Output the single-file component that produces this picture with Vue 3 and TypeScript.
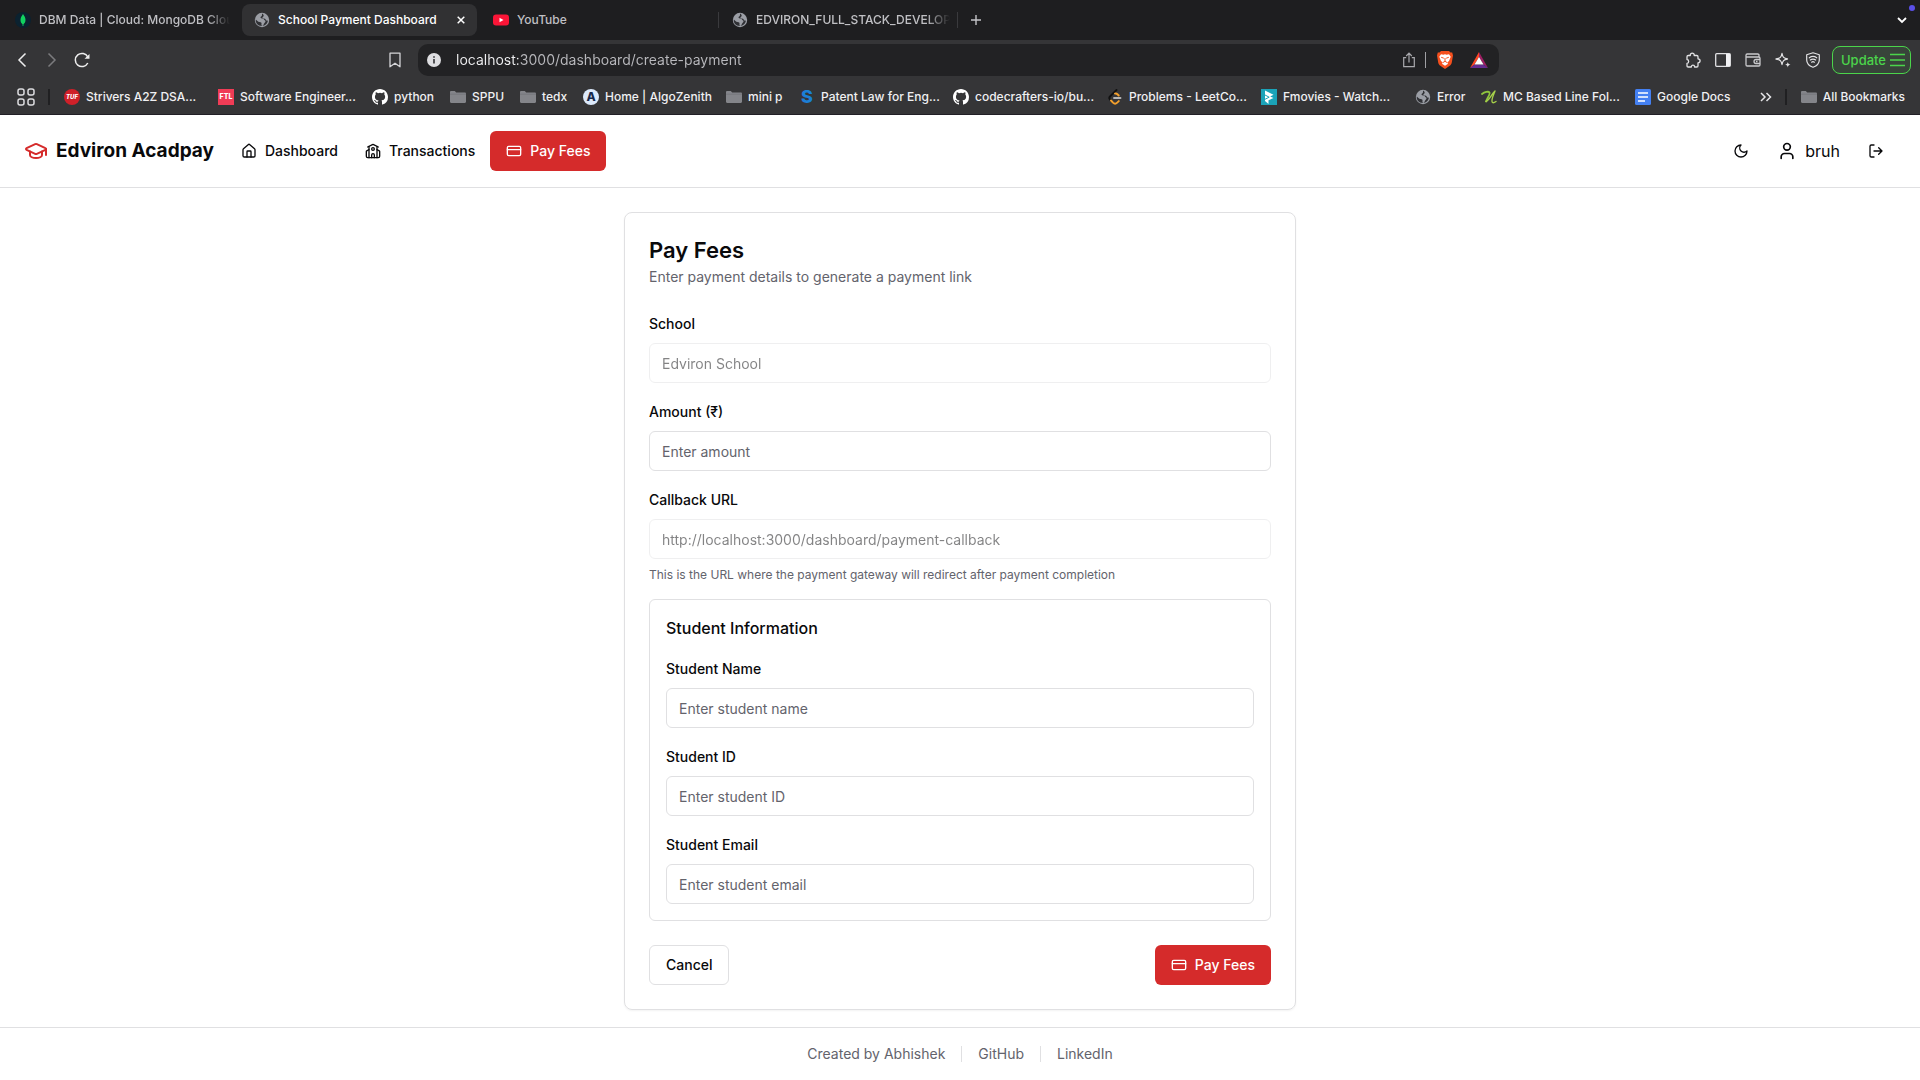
<script setup lang="ts">
import { ref } from 'vue'

interface Bookmark {
  label: string
  icon?: string
  badge?: string
  kind?: string
  width: number
}

interface Field {
  id: string
  label: string
  placeholder: string
}

const bookmarks: Bookmark[] = [
  { label: 'Strivers A2Z DSA...', badge: 'TUF', kind: 'tuf', width: 154 },
  { label: 'Software Engineer...', badge: 'FTL', kind: 'ftl', width: 154 },
  { label: 'python', icon: 'github', width: 78 },
  { label: 'SPPU', icon: 'folder', width: 70 },
  { label: 'tedx', icon: 'folder', width: 63 },
  { label: 'Home | AlgoZenith', badge: 'A', kind: 'algo', width: 143 },
  { label: 'mini p', icon: 'folder', width: 73 },
  { label: 'Patent Law for Eng...', badge: 'S', kind: 'swayam', width: 154 },
  { label: 'codecrafters-io/bu...', icon: 'github', width: 154 },
  { label: 'Problems - LeetCo...', icon: 'leet', width: 154 },
  { label: 'Fmovies - Watch...', icon: 'fmovies', width: 154 },
  { label: 'Error', icon: 'globe', width: 66 },
  { label: 'MC Based Line Fol...', icon: 'line', width: 154 },
  { label: 'Google Docs', icon: 'docs', width: 112 },
]

const tools = [
  { icon: 'puzzle', label: 'Extensions' },
  { icon: 'sidebar', label: 'Sidebar' },
  { icon: 'wallet', label: 'Wallet' },
  { icon: 'sparkle', label: 'Assistant' },
  { icon: 'vpn', label: 'VPN' },
]

const studentFields: Field[] = [
  { id: 'student-name', label: 'Student Name', placeholder: 'Enter student name' },
  { id: 'student-id', label: 'Student ID', placeholder: 'Enter student ID' },
  { id: 'student-email', label: 'Student Email', placeholder: 'Enter student email' },
]

const address = ref('localhost:3000/dashboard/create-payment')
const school = ref('Edviron School')
const callbackUrl = ref('http://localhost:3000/dashboard/payment-callback')
const amount = ref('')
const student = ref<Record<string, string>>({})
</script>

<template>
  <svg class="sprite" aria-hidden="true">
    <symbol id="i-globe" viewBox="0 0 16 16">
      <circle cx="8" cy="8" r="7.2" fill="#9b9ea5" />
      <path d="M8.6 1.6C7.2 2.6 8.8 3.6 7.2 4.5 5.8 5.2 6.6 6.6 8.2 6.6c1.8 0 1.6 1.5 2.9 2 .9.4.3 1.7-.6 2.5-1 .9-.6 2-1.7 2.6-1.1.3-1.6-.8-1.3-1.8.3-1.2-.6-1.6-1.9-1.8C3.7 9.8 3 8.4 1.8 7.4c-.5 3.200 1.900 6.500 6.200 6.500 3 0 5.800-2.400 5.900-5.400-.8.3-1.700.1-2.100-.8-.5-1.200-1.300-1.300-2.500-1.300-1 0-1.300-1.300-.2-1.700 1.200-.4.4-1.900-.5-3.100z" fill="#303135" />
    </symbol>
    <symbol id="i-mongo" viewBox="0 0 16 16">
      <circle cx="8" cy="8" r="8" fill="#0b2230" />
      <path d="M8 2c1.300 2 2.500 3.300 2.500 6S9.200 11.600 8 12.600C6.800 11.600 5.500 10.600 5.500 8S6.800 4 8 2z" fill="#12d360" />
      <path d="M8 7v7" stroke="#12d360" stroke-width=".8" />
    </symbol>
    <symbol id="i-youtube" viewBox="0 0 16 16">
      <rect y="2.500" width="16" height="11" rx="3" fill="#fb1537" />
      <path d="M6.500 5.700v4.600L10.500 8z" fill="#fff" />
    </symbol>
    <symbol id="i-folder" viewBox="0 0 16 16">
      <path d="M0 3.200C0 2.500.5 2 1.200 2h3.600l1.400 1.600h8.600c.7 0 1.200.5 1.200 1.200v8c0 .7-.5 1.200-1.200 1.200H1.200C.5 14 0 13.500 0 12.800z" fill="#84858a" />
      <path d="M0 5.200h16" stroke="#737479" stroke-width=".8" />
    </symbol>
    <symbol id="i-github" viewBox="0 0 16 16">
      <path fill="#fff" d="M8 0C3.580 0 0 3.580 0 8c0 3.540 2.290 6.530 5.470 7.590.4.070.55-.17.55-.38 0-.19-.01-.82-.01-1.490-2.010.37-2.530-.49-2.690-.94-.09-.23-.48-.94-.82-1.130-.28-.15-.68-.52-.01-.53.63-.01 1.080.58 1.230.82.72 1.210 1.870.87 2.330.66.07-.52.28-.87.51-1.070-1.780-.2-3.640-.89-3.640-3.950 0-.87.31-1.590.82-2.150-.08-.2-.36-1.020.08-2.120 0 0 .67-.21 2.200.82a7.600 7.600 0 0 1 4 0c1.530-1.040 2.200-.82 2.200-.82.44 1.100.16 1.920.08 2.120.51.56.82 1.270.82 2.150 0 3.070-1.870 3.750-3.650 3.950.29.25.54.73.54 1.480 0 1.070-.01 1.930-.01 2.200 0 .21.15.46.55.38A8 8 0 0 0 16 8c0-4.420-3.580-8-8-8z" />
    </symbol>
    <symbol id="i-leet" viewBox="0 0 16 16" fill="none" stroke-width="1.900" stroke-linecap="round">
      <path d="M9.500 1 3 7.500c-1 1-1 2 0 3l1 1.200" stroke="#111" />
      <path d="m4 11.500 2 2.200c1.200 1.200 3 1.200 4.200 0l1.600-1.600M8 4.600c1-.3 2 .2 2.700.9l1 1" stroke="#f4a02c" />
      <path d="M7 9h6.500" stroke="#b5b5b5" />
    </symbol>
    <symbol id="i-fmovies" viewBox="0 0 16 16">
      <rect width="16" height="16" fill="#1ba3b8" />
      <path d="m4 1.500 8.500 4.300-3.300 1.700L12.500 9 7.500 11.300V15L4 12z" fill="#fff" />
      <path d="m4 6 4.200 2.200L4 10.300" fill="none" stroke="#1ba3b8" />
    </symbol>
    <symbol id="i-line" viewBox="0 0 16 16" fill="none" stroke-linecap="round" stroke-linejoin="round">
      <path d="M1 5c2.500-2 6.500-3 7.500-1.500S6 9.500 5 12.500" stroke="#8fc63d" stroke-width="1.800" />
      <path d="M5 12.500C8.500 11 10.500 5 14 2c-1.500 4-4.500 10-2.500 11.500 1 .7 2.500-.3 3.500-1" stroke="#a6cf4a" stroke-width="1.400" />
    </symbol>
    <symbol id="i-docs" viewBox="0 0 16 16">
      <rect width="16" height="16" rx="1.500" fill="#4480f2" />
      <path d="M3 4h10M3 8h10M3 12h7" stroke="#fff" stroke-width="1.700" />
    </symbol>
    <symbol id="i-puzzle" viewBox="0 0 16 16" fill="none" stroke="#e2e2e4" stroke-width="1.300" stroke-linejoin="round">
      <path d="M3.200 3.500h2.100c-.5-3.200 4.400-3.200 3.900 0h2.600c.8 0 1.200.4 1.200 1.200v2.100c2.800.2 2.800 3.800 0 4v3c0 .8-.4 1.200-1.200 1.200H9.600c0-2.400-3.300-2.400-3.300 0H3.200c-.8 0-1.200-.4-1.200-1.200v-2.500c2.200-.2 2.200-3.600 0-3.800V4.700c0-.8.4-1.200 1.200-1.200z" />
    </symbol>
    <symbol id="i-sidebar" viewBox="0 0 16 16">
      <rect x=".7" y="1.700" width="14.600" height="12.600" rx="1" fill="none" stroke="#e2e2e4" stroke-width="1.300" />
      <path d="M11 2h4v12h-4z" fill="#f2f2f4" />
    </symbol>
    <symbol id="i-wallet" viewBox="0 0 16 16" fill="none" stroke="#c9c9cc" stroke-width="1.300">
      <path d="M14 5V3.200c0-.8-.5-1.200-1.200-1.200H2.200C1.400 2 1 2.500 1 3.200v9.600c0 .8.500 1.200 1.200 1.200h11.600c.8 0 1.200-.5 1.200-1.200V6.200C15 5.400 14.500 5 13.800 5H1.500M15 7.500h-4c-2.600 0-2.600 4 0 4h4M11 9.500h1.500" />
    </symbol>
    <symbol id="i-sparkle" viewBox="0 0 16 16">
      <path d="M7 1.500C7.700 5.200 8.800 6.300 12.500 7 8.800 7.700 7.700 8.800 7 12.500 6.300 8.800 5.200 7.700 1 7c4.200-.7 5.300-1.800 6-5.500z" fill="none" stroke="#e2e2e4" stroke-width="1.300" stroke-linejoin="round" />
      <path d="M12.800 10c.3 1.800.9 2.300 2.700 2.700-1.800.3-2.400.9-2.700 2.700-.3-1.800-.9-2.400-2.700-2.700 1.800-.4 2.400-.9 2.700-2.700z" fill="#e2e2e4" />
    </symbol>
    <symbol id="i-vpn" viewBox="0 0 16 16" fill="none" stroke="#e2e2e4" stroke-width="1.200" stroke-linecap="round">
      <path d="m8 .8 6.300 2V8c0 3.500-3 6-6.300 7.300C4.700 14 1.700 11.500 1.700 8V2.800z" stroke-linejoin="round" />
      <path d="M4.300 5.800c2.200-1.600 5.200-1.600 7.400 0M5.300 8c1.600-1.100 3.800-1.100 5.400 0M6.600 10.200c.9-.6 1.900-.6 2.800 0" />
    </symbol>
    <symbol id="i-card" viewBox="0 0 24 24" fill="none" stroke="currentColor" stroke-width="2" stroke-linecap="round">
      <rect x="2" y="5" width="20" height="14" rx="2" />
      <path d="M2 10h20" />
    </symbol>
  </svg>

  <div class="window">
    <section class="browser" aria-label="Browser">
      <div class="tabs">
        <div class="tab">
          <svg class="i16"><use href="#i-mongo" /></svg>
          <span class="tab-title fade">DBM Data | Cloud: MongoDB Cloud</span>
        </div>
        <div class="tab active">
          <svg class="i16"><use href="#i-globe" /></svg>
          <span class="tab-title">School Payment Dashboard</span>
          <button class="bare" type="button" aria-label="Close tab">
            <svg class="i8" viewBox="0 0 8 8"><path d="m.7.7 6.600 6.600M7.300.7.7 7.300" stroke="#fff" stroke-width="1.500" /></svg>
          </button>
        </div>
        <div class="tab ruled">
          <svg class="i16"><use href="#i-youtube" /></svg>
          <span class="tab-title">YouTube</span>
        </div>
        <div class="tab ruled">
          <svg class="i16"><use href="#i-globe" /></svg>
          <span class="tab-title fade">EDVIRON_FULL_STACK_DEVELOPER</span>
        </div>
        <button class="bare new-tab" type="button" aria-label="New tab">
          <svg class="i10" viewBox="0 0 10 10"><path d="M5 0v10M0 5h10" stroke="#c4c4c8" stroke-width="1.400" /></svg>
        </button>
        <button class="bare tab-list" type="button" aria-label="Search tabs">
          <svg class="i10" viewBox="0 0 10 10"><path d="m1 3 4 4 4-4" fill="none" stroke="#fff" stroke-width="1.800" /></svg>
          <i class="notice"></i>
        </button>
      </div>

      <div class="toolbar">
        <div class="nav-buttons">
          <button class="bare" type="button" aria-label="Back">
            <svg class="i16" viewBox="0 0 16 16"><path d="M11.500 1.500 5 8l6.500 6.500" fill="none" stroke="#eee" stroke-width="1.500" /></svg>
          </button>
          <button class="bare" type="button" aria-label="Forward">
            <svg class="i16" viewBox="0 0 16 16"><path d="M4.500 1.500 11 8l-6.500 6.500" fill="none" stroke="#7b7b7e" stroke-width="1.500" /></svg>
          </button>
          <button class="bare" type="button" aria-label="Reload">
            <svg class="i16" viewBox="0 0 16 16"><path d="M13.800 11A6.600 6.600 0 1 1 13.800 5" fill="none" stroke="#eee" stroke-width="1.500" /><path d="M10.500 6.800h5V2z" fill="#eee" /></svg>
          </button>
        </div>
        <button class="bare" type="button" aria-label="Bookmark this page">
          <svg class="i16" viewBox="0 0 16 16"><path d="M3 1.200h10v13.600l-5-3.600-5 3.600z" fill="none" stroke="#d5d5d8" stroke-width="1.300" stroke-linejoin="round" /></svg>
        </button>
        <div class="address">
          <svg class="i16" viewBox="0 0 16 16"><circle cx="8" cy="8" r="7" fill="#dedee1" /><path d="M8 7v4.500M8 4.200v1.500" stroke="#303033" stroke-width="1.600" /></svg>
          <input v-model="address" class="url" type="text" aria-label="Address" />
          <svg class="i16 share" viewBox="0 0 16 16"><path d="M5.200 5.700H2.700v9h10.600v-9h-2.500M8 10.500V1.300M5.200 4 8 1.200 10.800 4" fill="none" stroke="#a9a9ad" stroke-width="1.200" /></svg>
          <i class="address-rule"></i>
          <svg class="lion" viewBox="0 0 16 18">
            <path d="M4 0h8l1.500 1.500 1.700-.1.800 3-1.300 7.600c-.3 1.300-1 2-2 2.700L8 18l-4.700-3.300c-1-.7-1.700-1.400-2-2.700L0 4.400l.8-3 1.700.1z" fill="#f5501e" />
            <path d="m4 3.200 2.500.6L8 3.300l1.500.5 2.500-.6 1.700 2.500-1.700 4.300-1.800 1.500.8 1.200-3 2-3-2 .8-1.200L4 10 2.300 5.700z" fill="#fff" />
            <path d="m4.200 6.300 2.600.9M11.800 6.300l-2.600.9M8 7v3M6 11.500l2-1.200 2 1.200" stroke="#f5501e" stroke-width="1" fill="none" />
          </svg>
          <svg class="bat" viewBox="0 0 18 16">
            <path d="M9 0v5L4.500 12.500 0 16z" fill="#ff4724" />
            <path d="M9 0v5l4.500 7.500L18 16z" fill="#9e1f63" />
            <path d="m0 16 4.500-3.500h9L18 16z" fill="#662d91" />
            <path d="m9 5 4.500 7.500h-9z" fill="#fff" />
          </svg>
        </div>
        <div class="tools">
          <button v-for="tool in tools" :key="tool.icon" class="bare" type="button" :aria-label="tool.label">
            <svg class="i16"><use :href="'#i-' + tool.icon" /></svg>
          </button>
          <button class="update" type="button">
            Update
            <svg class="i16" viewBox="0 0 16 16"><path d="M0 2.500h15M0 8h15M0 13.500h15" stroke="#4bd54b" stroke-width="1.300" /></svg>
          </button>
        </div>
      </div>

      <nav class="bookmarks" aria-label="Bookmarks">
        <button class="bare apps" type="button" aria-label="Apps">
          <svg viewBox="0 0 18 18" fill="none" stroke="#dcdcdf" stroke-width="1.500">
            <rect x="1" y="1" width="6" height="6" rx="2" /><rect x="11" y="1" width="6" height="6" rx="2" />
            <rect x="1" y="11" width="6" height="6" rx="2" /><rect x="11" y="11" width="6" height="6" rx="2" />
          </svg>
        </button>
        <i class="rule"></i>
        <a v-for="mark in bookmarks" :key="mark.label" class="mark" href="#" :style="{ width: mark.width + 'px' }">
          <span v-if="mark.badge" class="badge" :class="mark.kind">{{ mark.badge }}</span>
          <svg v-else class="i16"><use :href="'#i-' + mark.icon" /></svg>
          {{ mark.label }}
        </a>
        <div class="bookmarks-end">
          <button class="bare" type="button" aria-label="More bookmarks">
            <svg class="i12" viewBox="0 0 12 12"><path d="m1 2 4 4-4 4M6.500 2l4 4-4 4" fill="none" stroke="#e6e6e8" stroke-width="1.500" /></svg>
          </button>
          <i class="rule"></i>
          <a class="mark" href="#"><svg class="i16"><use href="#i-folder" /></svg>All Bookmarks</a>
        </div>
      </nav>
    </section>

    <header class="header">
      <a class="brand" href="#">
        <svg class="i24" viewBox="0 0 24 24" fill="none" stroke="#d52b2b" stroke-width="2" stroke-linecap="round" stroke-linejoin="round">
          <path d="M21.420 10.922a1 1 0 0 0-.019-1.838L12.830 5.180a2 2 0 0 0-1.660 0L2.600 9.080a1 1 0 0 0 0 1.832l8.570 3.908a2 2 0 0 0 1.660 0z" />
          <path d="M22 10v6" />
          <path d="M6 12.500V16a6 3 0 0 0 12 0v-3.500" />
        </svg>
        Edviron Acadpay
      </a>
      <nav class="links">
        <a class="link" href="#">
          <svg class="i16" viewBox="0 0 24 24" fill="none" stroke="currentColor" stroke-width="2" stroke-linecap="round" stroke-linejoin="round">
            <path d="M15 21v-8a1 1 0 0 0-1-1h-4a1 1 0 0 0-1 1v8" />
            <path d="M3 10a2 2 0 0 1 .709-1.528l7-5.999a2 2 0 0 1 2.582 0l7 5.999A2 2 0 0 1 21 10v9a2 2 0 0 1-2 2H5a2 2 0 0 1-2-2z" />
          </svg>
          Dashboard
        </a>
        <a class="link" href="#">
          <svg class="i16" viewBox="0 0 24 24" fill="none" stroke="currentColor" stroke-width="2" stroke-linecap="round" stroke-linejoin="round">
            <path d="M14 22v-4a2 2 0 1 0-4 0v4" />
            <path d="m18 10 3.447 1.724a1 1 0 0 1 .553.894V20a2 2 0 0 1-2 2H4a2 2 0 0 1-2-2v-7.382a1 1 0 0 1 .553-.894L6 10" />
            <path d="M18 5v17M6 5v17" />
            <path d="m4 6 7.106-3.553a2 2 0 0 1 1.788 0L20 6" />
            <circle cx="12" cy="9" r="2" />
          </svg>
          Transactions
        </a>
        <a class="button primary" href="#"><svg class="i16"><use href="#i-card" /></svg>Pay Fees</a>
      </nav>
      <div class="account">
        <button class="icon-button" type="button" aria-label="Toggle theme">
          <svg class="i16" viewBox="0 0 24 24" fill="none" stroke="currentColor" stroke-width="2" stroke-linecap="round" stroke-linejoin="round"><path d="M12 3a6 6 0 0 0 9 9 9 9 0 1 1-9-9Z" /></svg>
        </button>
        <span class="user">
          <svg class="i20" viewBox="0 0 24 24" fill="none" stroke="currentColor" stroke-width="2" stroke-linecap="round" stroke-linejoin="round"><path d="M19 21v-2a4 4 0 0 0-4-4H9a4 4 0 0 0-4 4v2" /><circle cx="12" cy="7" r="4" /></svg>
          bruh
        </span>
        <button class="icon-button" type="button" aria-label="Log out">
          <svg class="i16" viewBox="0 0 24 24" fill="none" stroke="currentColor" stroke-width="2" stroke-linecap="round" stroke-linejoin="round"><path d="M9 21H5a2 2 0 0 1-2-2V5a2 2 0 0 1 2-2h4M16 17l5-5-5-5M21 12H9" /></svg>
        </button>
      </div>
    </header>

    <main class="main">
      <form class="card" @submit.prevent>
        <div class="card-head">
          <h1 class="title">Pay Fees</h1>
          <p class="subtitle">Enter payment details to generate a payment link</p>
        </div>
        <div class="fields">
          <div class="field">
            <label for="school">School</label>
            <input id="school" v-model="school" class="input" type="text" disabled />
          </div>
          <div class="field">
            <label for="amount">Amount (₹)</label>
            <input id="amount" v-model="amount" class="input" type="text" inputmode="decimal" placeholder="Enter amount" />
          </div>
          <div class="field">
            <label for="callback">Callback URL</label>
            <input id="callback" v-model="callbackUrl" class="input" type="text" disabled />
            <p class="hint">This is the URL where the payment gateway will redirect after payment completion</p>
          </div>
          <section class="student">
            <h2 class="student-title">Student Information</h2>
            <div v-for="field in studentFields" :key="field.id" class="field">
              <label :for="field.id">{{ field.label }}</label>
              <input :id="field.id" v-model="student[field.id]" class="input" type="text" :placeholder="field.placeholder" />
            </div>
          </section>
        </div>
        <div class="actions">
          <button class="button outline" type="button">Cancel</button>
          <button class="button primary" type="submit"><svg class="i16"><use href="#i-card" /></svg>Pay Fees</button>
        </div>
      </form>
    </main>

    <footer class="footer">
      <span>Created by Abhishek</span>
      <i class="footer-rule"></i>
      <a href="#">GitHub</a>
      <i class="footer-rule"></i>
      <a href="#">LinkedIn</a>
    </footer>
  </div>
</template>

<style>
body {
  margin: 0;
  background: #fff;
}
</style>

<style scoped>
* {
  box-sizing: border-box;
}
.sprite {
  position: absolute;
  width: 0;
  height: 0;
}
.window {
  display: flex;
  flex-direction: column;
  min-height: 100vh;
  font: 400 16px/24px Inter, "Noto Sans", sans-serif;
  color: #09090b;
}
svg,
i {
  flex: none;
  display: block;
}
a {
  color: inherit;
  text-decoration: none;
}
button,
input {
  font: inherit;
  color: inherit;
}
h1,
h2,
p {
  margin: 0;
}
.i8 { width: 8px; height: 8px; }
.i10 { width: 10px; height: 10px; }
.i12 { width: 12px; height: 12px; }
.i16 { width: 16px; height: 16px; }
.i20 { width: 20px; height: 20px; }
.i24 { width: 24px; height: 24px; }
.bare {
  flex: none;
  display: flex;
  padding: 0;
  border: 0;
  background: none;
}

/* browser frame */
.browser {
  background: #353537;
  border-bottom: 1px solid #211f26;
  color: #f0f0f2;
  font: 500 12px/16px Inter, "Noto Sans", sans-serif;
}
.tabs {
  display: flex;
  align-items: center;
  height: 40px;
  padding: 0 8px 0 3px;
  background: #1e1e20;
}
.tab {
  display: flex;
  align-items: center;
  gap: 8px;
  width: 239px;
  height: 32px;
  padding: 0 12px;
  color: #c0c0c4;
}
.tab.active {
  width: 235px;
  background: #313133;
  border-radius: 8px;
  color: #fff;
}
.tab.ruled {
  width: 242px;
  padding-left: 16px;
  background: linear-gradient(#3a3a3d, #3a3a3d) right center / 1px 16px no-repeat;
}
.tab.ruled + .ruled {
  width: 239px;
  padding: 0 8px 0 13px;
}
.tab-title {
  flex: 1;
  overflow: hidden;
  white-space: nowrap;
}
.tab-title.fade {
  mask-image: linear-gradient(to right, #000 88%, transparent);
}
.new-tab {
  margin-left: 13px;
}
.tab-list {
  position: relative;
  margin-left: auto;
  margin-right: 5px;
}
.notice {
  position: absolute;
  right: -8px;
  top: -10px;
  width: 6px;
  height: 6px;
  border-radius: 50%;
  background: #5b50e8;
}
.toolbar {
  display: flex;
  align-items: center;
  height: 40px;
  padding: 0 9px 0 14px;
}
.nav-buttons {
  display: flex;
  gap: 14px;
  flex: 0 0 373px;
}
.address {
  display: flex;
  align-items: center;
  flex: 0 1 1081px;
  height: 32px;
  margin-left: 15px;
  padding: 0 11px 0 8px;
  background: #222224;
  border-radius: 10px;
}
.url {
  flex: 1;
  min-width: 0;
  margin-left: 14px;
  padding: 0;
  border: 0;
  outline: 0;
  font-size: 14px;
  font-weight: 400;
  line-height: 20px;
  color: transparent;
  background: linear-gradient(to right, #f0f0f2 62px, #b9b9bd 62px);
  background-clip: text;
}
.address-rule {
  width: 1px;
  height: 16px;
  margin: 0 11px 0 8px;
  background: #a0a0a4;
}
.lion {
  width: 16px;
  height: 18px;
  margin-right: 17px;
}
.bat {
  width: 18px;
  height: 16px;
}
.tools {
  display: flex;
  align-items: center;
  gap: 14px;
  margin-left: auto;
}
.update {
  display: flex;
  align-items: center;
  gap: 4px;
  height: 28px;
  margin-left: -3px;
  padding: 0 4px 0 8px;
  border: 1px solid #4bd54b;
  border-radius: 8px;
  background: #38443a;
  color: #4bd54b;
  font-size: 13px;
}
.bookmarks {
  display: flex;
  align-items: center;
  height: 34px;
  padding: 0 15px 0 17px;
  white-space: nowrap;
}
.apps svg {
  width: 18px;
  height: 18px;
}
.rule {
  width: 2px;
  height: 16px;
  margin: 0 14px 0 13px;
  background: #202022;
}
.mark {
  flex: none;
  display: flex;
  align-items: center;
  gap: 6px;
}
.badge {
  flex: none;
  display: flex;
  align-items: center;
  justify-content: center;
  width: 16px;
  height: 16px;
  color: #fff;
  font-weight: 800;
}
.tuf {
  border-radius: 50%;
  background: #cf2029;
  font-size: 6px;
  font-style: italic;
}
.ftl {
  background: #f03c56;
  font-size: 7px;
}
.algo {
  border-radius: 50%;
  background: #dce9fb;
  color: #17294d;
  font-size: 12px;
}
.swayam {
  color: #1b7fd6;
  font-size: 18px;
}
.bookmarks-end {
  display: flex;
  align-items: center;
  margin-left: auto;
}

/* page header */
.header {
  display: flex;
  align-items: center;
  height: 73px;
  padding: 0 24px;
  border-bottom: 1px solid #e0e0e2;
}
.brand {
  display: flex;
  align-items: center;
  gap: 8px;
  font-size: 19px;
  font-weight: 700;
  line-height: 28px;
}
.links {
  display: flex;
  align-items: center;
  gap: 3px;
  margin-left: 15px;
}
.link,
.button {
  display: flex;
  align-items: center;
  gap: 8px;
  height: 40px;
  padding: 0 12px;
  font-size: 14px;
  font-weight: 500;
  line-height: 20px;
}
.button {
  padding: 0 16px;
  border: 0;
  border-radius: 6px;
}
.primary {
  background: #d52b2b;
  color: #fff;
}
.outline {
  border: 1px solid #e0e0e2;
  background: #fff;
}
.account {
  display: flex;
  align-items: center;
  gap: 16px;
  margin-left: auto;
}
.icon-button {
  display: flex;
  align-items: center;
  justify-content: center;
  width: 40px;
  height: 40px;
  padding: 0;
  border: 0;
  background: none;
}
.user {
  display: flex;
  align-items: center;
  gap: 8px;
}

/* payment form */
.main {
  flex: 1;
  padding: 24px 24px 16px;
}
.card {
  max-width: 672px;
  margin: 0 auto;
  padding: 24px;
  border: 1px solid #e0e0e2;
  border-radius: 8px;
  box-shadow: 0 1px 2px rgba(0, 0, 0, 0.05);
}
.card-head {
  display: flex;
  flex-direction: column;
  gap: 4px;
  margin-bottom: 24px;
}
.title {
  font-size: 22px;
  font-weight: 600;
  line-height: 26px;
}
.subtitle {
  color: #63636c;
  font-size: 14px;
  line-height: 20px;
}
.fields,
.student {
  display: flex;
  flex-direction: column;
  gap: 16px;
}
.field {
  display: flex;
  flex-direction: column;
  gap: 8px;
}
label {
  padding-top: 2px;
  font-size: 14px;
  font-weight: 500;
  line-height: 22px;
}
.input {
  width: 100%;
  height: 40px;
  padding: 8px 12px;
  border: 1px solid #e0e0e2;
  border-radius: 6px;
  background: #fff;
  font-size: 14px;
  line-height: 20px;
}
.input::placeholder {
  color: #63636c;
  opacity: 1;
}
.input:disabled {
  opacity: 0.5;
}
.hint {
  color: #63636c;
  font-size: 12px;
  line-height: 16px;
}
.student {
  padding: 16px;
  border: 1px solid #e0e0e2;
  border-radius: 6px;
}
.student-title {
  font-size: 16px;
  font-weight: 500;
  line-height: 24px;
}
.actions {
  display: flex;
  justify-content: space-between;
  margin-top: 24px;
}

.footer {
  display: flex;
  align-items: center;
  justify-content: center;
  gap: 16px;
  padding: 16px;
  border-top: 1px solid #e0e0e2;
  color: #63636c;
  font-size: 14px;
  line-height: 20px;
}
.footer-rule {
  width: 1px;
  height: 16px;
  background: #e0e0e2;
}
</style>
